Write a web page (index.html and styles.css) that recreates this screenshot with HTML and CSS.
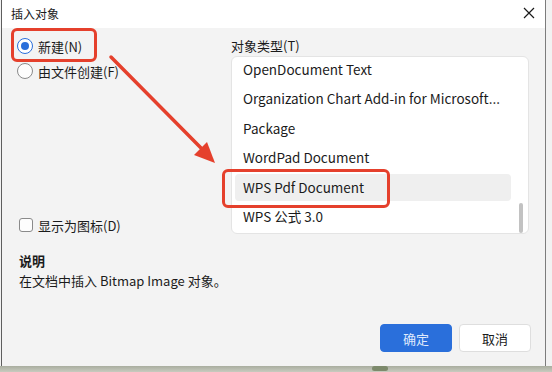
FILE: index.html
```html
<!DOCTYPE html>
<html lang="zh-CN">
<head>
<meta charset="utf-8">
<link rel="stylesheet" href="styles.css">
</head>
<body>
<div class="screen">
  <div class="dialog">
    <div class="titlebar">
      <span class="title">插入对象</span>
      <svg class="close" width="12" height="12" viewBox="0 0 12 12"><path d="M1 1L11 11M11 1L1 11" stroke="#1a1a1a" stroke-width="1.2" fill="none"/></svg>
    </div>
    <div class="body">
      <div class="top">
        <div class="left">
          <div class="opt"><span class="radio on"></span><span>新建(N)</span></div>
          <div class="opt"><span class="radio"></span><span>由文件创建(F)</span></div>
          <div class="opt check-row"><span class="check"></span><span>显示为图标(D)</span></div>
        </div>
        <div class="right">
          <div class="label">对象类型(T)</div>
          <div class="list">
            <div class="item">OpenDocument Text</div>
            <div class="item">Organization Chart Add-in for Microsoft...</div>
            <div class="item">Package</div>
            <div class="item">WordPad Document</div>
            <div class="item sel">WPS Pdf Document</div>
            <div class="item">WPS 公式 3.0</div>
            <div class="thumb"></div>
          </div>
        </div>
      </div>
      <div class="desc">
        <div class="desc-h">说明</div>
        <div class="desc-t">在文档中插入 Bitmap Image 对象。</div>
      </div>
      <div class="buttons">
        <button class="btn primary">确定</button>
        <button class="btn">取消</button>
      </div>
    </div>
  </div>
  <div class="ground"><span class="leaf"></span></div>
  <div class="mark mark1"></div>
  <div class="mark mark2"></div>
  <svg class="arrow" width="552" height="372" viewBox="0 0 552 372">
    <line x1="111" y1="57" x2="203" y2="150" stroke="#e5402c" stroke-width="3.5" stroke-linecap="round"/>
    <path d="M215 163 L194 155 L207 142 Z" fill="#e5402c"/>
  </svg>
</div>
</body>
</html>
```
FILE: styles.css
```css
* { box-sizing: border-box; }
html, body { margin: 0; padding: 0; }
body {
  background: #f2f2f2;
  font-family: "Noto Sans CJK SC", "Noto Sans", sans-serif;
  color: #1b1b1b;
}
.screen {
  position: relative;
  width: 552px;
  height: 372px;
  overflow: hidden;
  display: flex;
  flex-direction: column;
}
.dialog {
  margin-left: 1px;
  width: 545px;
  height: 366px;
  border-left: 1px solid #5e5e5e;
  border-right: 1px solid #7c7c7c;
  display: flex;
  flex-direction: column;
  background: #f3f3f3;
}
.titlebar {
  height: 28px;
  background: #ffffff;
  display: flex;
  align-items: center;
  justify-content: space-between;
  padding: 0 10px 0 9px;
}
.title { font-size: 12px; line-height: 16px; }
.close { margin-top: -2px; }
.body {
  flex: 1;
  display: flex;
  flex-direction: column;
  padding: 9px 14px 14px 14px;
}
.top {
  display: flex;
}
.left {
  width: 215px;
  display: flex;
  flex-direction: column;
  gap: 7px;
}
.opt {
  display: flex;
  align-items: center;
  height: 18px;
  font-size: 13px;
  gap: 5px;
}
.check-row { margin-top: auto; padding-left: 3px; }
.radio {
  width: 16px;
  height: 16px;
  border-radius: 50%;
  border: 1px solid #8a8a8a;
  background: #fdfdfd;
  margin-left: 1px;
  position: relative;
}
.radio.on {
  border-color: #2a6fdb;
  background: #ffffff;
}
.radio.on::after {
  content: "";
  position: absolute;
  left: 3px; top: 3px;
  width: 8px; height: 8px;
  border-radius: 50%;
  background: #2a6fdb;
}
.check {
  width: 14px; height: 14px;
  border: 1px solid #8a8a8a;
  border-radius: 3px;
  background: #fdfdfd;
}
.right {
  width: 298px;
  display: flex;
  flex-direction: column;
}
.label { font-size: 13px; line-height: 18px; height: 19px; }
.list {
  position: relative;
  height: 178px;
  background: #ffffff;
  border: 1px solid #e4e4e4;
  border-radius: 6px;
  padding: 0 17px 0 3px;
  overflow: hidden;
  display: flex;
  flex-direction: column;
  gap: 2.5px;
}
.item {
  flex: none;
  height: 27px;
  line-height: 27px;
  padding-left: 8px;
  font-size: 13.5px;
  border-radius: 4px;
  white-space: nowrap;
}
.item:first-child { margin-top: -1.5px; }
.item.sel { background: #efefef; }
.thumb {
  position: absolute;
  right: 5px;
  top: 146px;
  width: 4px;
  height: 30px;
  border-radius: 2px;
  background: #c2c2c2;
}
.desc { margin-top: 17px; padding-left: 3px; font-size: 13px; }
.desc-h { font-weight: bold; line-height: 20px; }
.desc-t { line-height: 20px; }
.buttons {
  margin-top: auto;
  display: flex;
  justify-content: flex-end;
  gap: 7px;
}
.btn {
  width: 72px;
  height: 28px;
  font-family: inherit;
  font-size: 13px;
  border-radius: 4px;
  border: 1px solid #dedede;
  background: #ffffff;
  color: #1b1b1b;
  padding: 0;
}
.btn.primary {
  background: #2a6fdb;
  border-color: #2a6fdb;
  color: #dfe9fb;
}
.ground {
  flex: 1;
  background: linear-gradient(#a9ad9f, #c8cbbf);
  position: relative;
}
.leaf {
  position: absolute;
  left: 372px;
  top: 0;
  width: 16px;
  height: 5px;
  background: #7d8a6c;
  border-radius: 3px;
}
.mark {
  position: absolute;
  border: 3px solid #e5402c;
  border-radius: 6px;
}
.mark1 { left: 11px; top: 28px; width: 86px; height: 34px; }
.mark2 { left: 222px; top: 169px; width: 168px; height: 39px; }
.arrow { position: absolute; left: 0; top: 0; pointer-events: none; }
```
